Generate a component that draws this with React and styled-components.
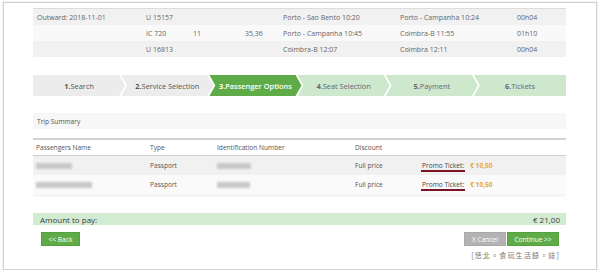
import React from "react";
import styled, { createGlobalStyle } from "styled-components";

const Global = createGlobalStyle`
  html, body {
    margin: 0;
    padding: 0;
    background: #fff;
  }
  body {
    font-family: "Open Sans", "Noto Sans", sans-serif;
    color: #555;
  }
`;

const Frame = styled.div`
  box-sizing: border-box;
  margin: 2px 3px 0;
  height: 268px;
  border: 1px solid #d2d2d2;
  box-shadow: 0 0 0 1px #f0f0f0;
  padding: 5px 30px 0 29px;
`;

const TopTable = styled.div`
  border-top: 1px solid #dcdcdc;
`;

const TopRow = styled.div`
  display: grid;
  grid-template-columns: 109px 47px 52px 38px 117px 117px 1fr;
  align-items: center;
  height: 16px;
  padding-left: 4px;
  font-size: 7px;
  color: #666;
  background: ${(p) => (p.$odd ? "#f1f1f1" : "#f9f9f9")};
  white-space: nowrap;
`;

const Steps = styled.div`
  display: flex;
  margin-top: 18px;
  height: 21px;
`;

const Step = styled.div`
  flex: 1;
  display: flex;
  align-items: center;
  justify-content: center;
  margin-left: ${(p) => (p.$first ? "0" : "-4px")};
  font-size: 7.4px;
  white-space: nowrap;
  background: ${(p) =>
    p.$state === "done" ? "#ececec" : p.$state === "active" ? "#5fab47" : "#cde8cd"};
  color: ${(p) =>
    p.$state === "done" ? "#555" : p.$state === "active" ? "#fff" : "#667"};
  font-weight: ${(p) => (p.$state === "active" ? 600 : 400)};
  clip-path: ${(p) =>
    p.$first
      ? "polygon(0 0, calc(100% - 6px) 0, 100% 50%, calc(100% - 6px) 100%, 0 100%)"
      : p.$last
      ? "polygon(0 0, 100% 0, 100% 100%, 0 100%, 6px 50%)"
      : "polygon(0 0, calc(100% - 6px) 0, 100% 50%, calc(100% - 6px) 100%, 0 100%, 6px 50%)"};
  b {
    font-weight: 700;
  }
`;

const SummaryBox = styled.div`
  margin-top: 17px;
  height: 16px;
  display: flex;
  align-items: center;
  padding-left: 4px;
  background: #f7f7f7;
  font-size: 6.6px;
  color: #555;
`;

const TripTable = styled.div`
  margin-top: 9px;
  border-top: 2px solid #d2d2d2;
  border-bottom: 3px solid #f6f6f6;
`;

const TripRow = styled.div`
  display: grid;
  grid-template-columns: 114px 67px 138px 68px 1fr;
  align-items: center;
  height: ${(p) => (p.$head ? "15px" : "19px")};
  padding-left: 3px;
  font-size: 6.6px;
  color: #555;
  background: ${(p) => (p.$head ? "#fff" : p.$odd ? "#f1f1f1" : "#fafafa")};
  border-bottom: ${(p) => (p.$head ? "1px solid #cfcfcf" : "none")};
  white-space: nowrap;
`;

const Blur = styled.div`
  width: ${(p) => p.$w}px;
  height: 6px;
  background: #c9c9c9;
  filter: blur(1px);
`;

const Promo = styled.span`
  color: #444;
  padding: 0 1px;
  margin-left: -2px;
  border-bottom: 2px solid #7a1322;
`;

const Price = styled.span`
  color: #eaa92a;
  font-weight: 700;
  margin-left: 5px;
`;

const AmountBar = styled.div`
  margin-top: 16px;
  height: 12px;
  display: flex;
  align-items: center;
  justify-content: space-between;
  padding: 0 6px 0 7px;
  background: #d2ecd4;
  font-size: 8px;
  color: #3c3c3c;
`;

const ButtonRow = styled.div`
  display: flex;
  justify-content: space-between;
  align-items: flex-start;
  margin-top: 7px;
  padding: 0 7px 0 8px;
`;

const RightCol = styled.div`
  display: flex;
  flex-direction: column;
  align-items: flex-end;
`;

const Buttons = styled.div`
  display: flex;
  gap: 1px;
`;

const Button = styled.div`
  width: ${(p) => p.$w}px;
  height: 14px;
  display: flex;
  align-items: center;
  justify-content: center;
  font-size: 6.6px;
  color: #fff;
  background: ${(p) => (p.$gray ? "#b3b3b3" : "#5fab47")};
  border: 1px solid ${(p) => (p.$gray ? "#a9a9a9" : "#53a03c")};
  box-sizing: border-box;
`;

const Watermark = styled.div`
  margin-top: 4px;
  margin-right: -1px;
  font-family: "Noto Sans CJK TC", sans-serif;
  font-size: 7.2px;
  letter-spacing: 1px;
  color: #777;
`;

const topRows = [
  ["Outward: 2018-11-01", "U 15157", "", "", "Porto - Sao Bento 10:20", "Porto - Campanha 10:24", "00h04"],
  ["", "IC 720", "11", "35,36", "Porto - Campanha 10:45", "Coimbra-B 11:55", "01h10"],
  ["", "U 16813", "", "", "Coimbra-B 12:07", "Coimbra 12:11", "00h04"],
];

const steps = [
  ["1.", "Search", "done"],
  ["2.", "Service Selection", "done"],
  ["3.", "Passenger Options", "active"],
  ["4.", "Seat Selection", "todo"],
  ["5.", "Payment", "todo"],
  ["6.", "Tickets", "todo"],
];

const passengers = [
  { name: 36, id: 34 },
  { name: 56, id: 33 },
];

export default function App() {
  return (
    <>
      <Global />
      <Frame>
        <TopTable>
          {topRows.map((r, i) => (
            <TopRow key={i} $odd={i % 2 === 0}>
              {r.map((c, j) => (
                <span key={j}>{c}</span>
              ))}
            </TopRow>
          ))}
        </TopTable>

        <Steps>
          {steps.map(([n, label, state], i) => (
            <Step key={n} $state={state} $first={i === 0} $last={i === steps.length - 1}>
              <b>{n}</b>
              {label}
            </Step>
          ))}
        </Steps>

        <SummaryBox>Trip Summary</SummaryBox>

        <TripTable>
          <TripRow $head>
            <span>Passengers Name</span>
            <span>Type</span>
            <span>Identification Number</span>
            <span>Discount</span>
            <span />
          </TripRow>
          {passengers.map((p, i) => (
            <TripRow key={i} $odd={i % 2 === 0}>
              <Blur $w={p.name} />
              <span>Passport</span>
              <Blur $w={p.id} />
              <span>Full price</span>
              <span>
                <Promo>Promo Ticket:</Promo>
                <Price>€ 10,50</Price>
              </span>
            </TripRow>
          ))}
        </TripTable>

        <AmountBar>
          <span>Amount to pay:</span>
          <span>€ 21,00</span>
        </AmountBar>

        <ButtonRow>
          <Button $w={39}>&lt;&lt; Back</Button>
          <RightCol>
            <Buttons>
              <Button $w={42} $gray>X Cancel</Button>
              <Button $w={52}>Continue &gt;&gt;</Button>
            </Buttons>
            <Watermark>[恁北。食玩生活錄。誌]</Watermark>
          </RightCol>
        </ButtonRow>
      </Frame>
    </>
  );
}
